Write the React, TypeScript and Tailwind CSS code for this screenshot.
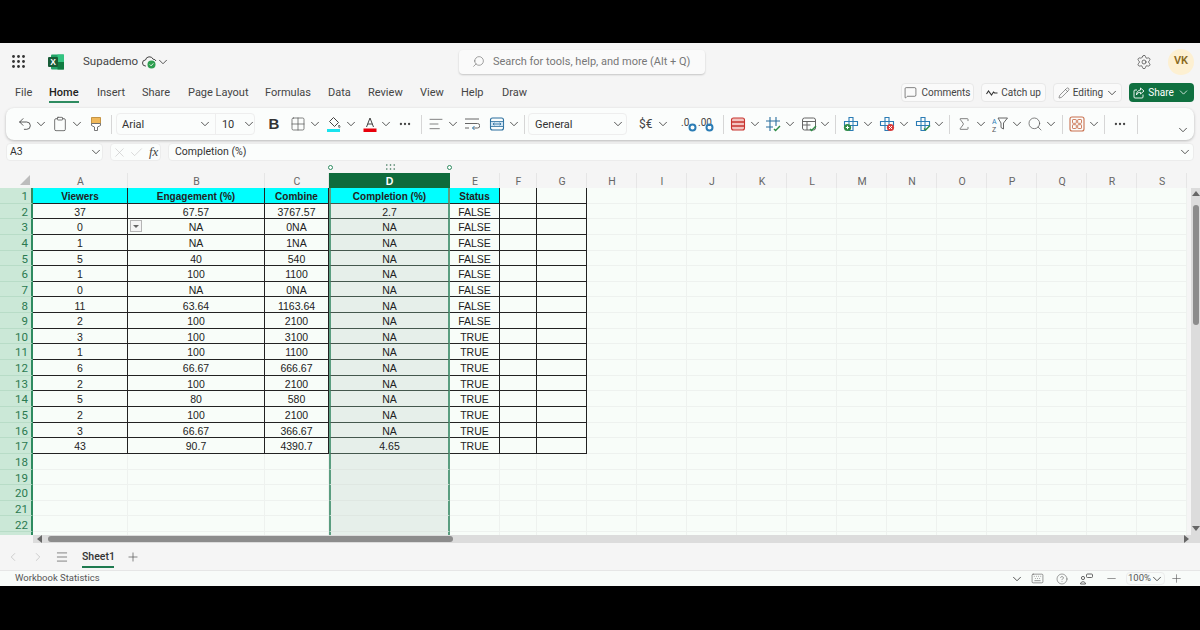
import {
  AlignLeft,
  Check,
  ChevronDown,
  ChevronLeft,
  ChevronRight,
  CircleHelp,
  Clipboard,
  Ellipsis,
  Grid2x2,
  Keyboard,
  Menu,
  MessageSquare,
  Minus,
  Pencil,
  Plus,
  Search,
  Settings,
  Sigma,
  Undo2,
  X,
} from 'lucide-react';

const columns = ['A', 'B', 'C', 'D', 'E', 'F', 'G', 'H', 'I', 'J', 'K', 'L', 'M', 'N', 'O', 'P', 'Q', 'R', 'S'];

const sheet = [
  ['Viewers', 'Engagement (%)', 'Combine', 'Completion (%)', 'Status'],
  ['37', '67.57', '3767.57', '2.7', 'FALSE'],
  ['0', 'NA', '0NA', 'NA', 'FALSE'],
  ['1', 'NA', '1NA', 'NA', 'FALSE'],
  ['5', '40', '540', 'NA', 'FALSE'],
  ['1', '100', '1100', 'NA', 'FALSE'],
  ['0', 'NA', '0NA', 'NA', 'FALSE'],
  ['11', '63.64', '1163.64', 'NA', 'FALSE'],
  ['2', '100', '2100', 'NA', 'FALSE'],
  ['3', '100', '3100', 'NA', 'TRUE'],
  ['1', '100', '1100', 'NA', 'TRUE'],
  ['6', '66.67', '666.67', 'NA', 'TRUE'],
  ['2', '100', '2100', 'NA', 'TRUE'],
  ['5', '80', '580', 'NA', 'TRUE'],
  ['2', '100', '2100', 'NA', 'TRUE'],
  ['3', '66.67', '366.67', 'NA', 'TRUE'],
  ['43', '90.7', '4390.7', '4.65', 'TRUE'],
];

// row 23 only peeks in above the scrollbar, so it has no number
const rowNumbers = Array.from({ length: 23 }, (_, i) => i + 1);

// 14px glyph in an 11px slot, the ribbon spacing is worked out on the slot
function Chev({ className = '' }: { className?: string }) {
  return (
    <span className={`w-[11px] shrink-0 flex justify-center text-[#333] ${className}`}>
      <ChevronDown size={14} strokeWidth={1.4} className="shrink-0" />
    </span>
  );
}

function Sep({ className = '' }: { className?: string }) {
  return <div className={`w-px h-[19px] shrink-0 bg-[#d6d6d6] ${className}`} />;
}

function Cross({ badge }: { badge: string }) {
  return (
    <svg width="16" height="16" viewBox="0 0 16 16" fill="none" className="shrink-0">
      <path d="M6 1.5h4v4h4.5v4H10v5H6v-5H1.5v-4H6z" stroke="#2b7cb5" strokeWidth="1.1" />
      <path d="M6 5.5h4v4H6z" stroke="#2b7cb5" strokeWidth="1" />
      {badge === 'add' && <circle cx="4.5" cy="11.5" r="3.6" fill="#2e8b45" />}
      {badge === 'add' && <path d="M2.8 11.5h3.4M4.5 9.8v3.4" stroke="#fff" strokeWidth="1" />}
      {badge === 'del' && <circle cx="11.5" cy="11.5" r="3.6" fill="#d83b3b" />}
      {badge === 'del' && <path d="M10 10l3 3M13 10l-3 3" stroke="#fff" strokeWidth="1" />}
      {badge === 'fmt' && <path d="M9 12.5l1.6 1.6L15 9.5" stroke="#2e8b45" strokeWidth="1.4" />}
    </svg>
  );
}

function Ribbon() {
  return (
    <div className="mx-[6px] mt-[3px] h-[32px] flex items-center pl-[11px] pr-[6px] rounded-lg bg-[#fbfdfc] shadow-[0_1px_3px_rgba(0,0,0,0.25)]">
      <Undo2 size={16} strokeWidth={1.2} className="shrink-0 text-[#333]" />
      <Chev className="ml-[2px]" />
      <Clipboard size={16} strokeWidth={1.2} className="shrink-0 ml-[6px] text-[#555]" />
      <Chev className="ml-[3px]" />
      <svg width="16" height="16" viewBox="0 0 16 16" fill="none" className="shrink-0 ml-[6px]">
        <path d="M3.5 1.5h9v6h-9z" fill="#f0b85a" stroke="#b9812a" strokeWidth="0.8" />
        <path d="M3.5 7.5h9v2l-3 1.5v3.5h-3V11l-3-1.5z" fill="#fff" stroke="#666" strokeWidth="0.9" />
      </svg>
      <Sep className="ml-[7px]" />
      <div className="ml-[4px] w-[139px] h-[22px] shrink-0 flex items-center rounded border border-[#eeeeee] text-[11px] text-[#333]">
        <span className="pl-[5px] pt-[2px] w-[87px]">Arial</span>
        <Chev />
        <div className="w-px h-full ml-[4px] bg-[#eeeeee]" />
        <span className="pl-[6px] pt-[2px] w-[24px]">10</span>
        <Chev className="ml-[4px]" />
      </div>
      <span className="ml-[13px] w-[12px] shrink-0 text-center text-[15px] font-bold text-[#333] font-['Liberation_Sans',sans-serif]">B</span>
      <Grid2x2 size={16} strokeWidth={1.1} className="shrink-0 ml-[10px] text-[#555]" />
      <Chev className="ml-[3px]" />
      <svg width="16" height="16" viewBox="0 0 16 16" fill="none" className="shrink-0 ml-[6px]">
        <path d="M7.5 1.5l5 5-4 4-5-5z" stroke="#444" strokeWidth="1" />
        <path d="M13 9c1 1.3 1.4 2 .6 2.6-.7.4-1.4-.5-.6-2.6z" stroke="#444" strokeWidth="0.8" />
        <rect x="1" y="13" width="13" height="3" fill="#19e3ee" />
      </svg>
      <Chev className="ml-[3px]" />
      <svg width="16" height="16" viewBox="0 0 16 16" fill="none" className="shrink-0 ml-[6px]">
        <path d="M4.5 11L8 2l3.5 9M5.6 8h4.8" stroke="#444" strokeWidth="1" />
        <rect x="1.5" y="12.5" width="13" height="3.5" fill="#e8000b" />
      </svg>
      <Chev className="ml-[2px]" />
      <Ellipsis size={14} strokeWidth={2} className="shrink-0 ml-[7px] text-[#444]" />
      <Sep className="ml-[9px]" />
      <AlignLeft size={16} strokeWidth={1.1} className="shrink-0 ml-[6px] text-[#555]" />
      <Chev className="ml-[3px]" />
      <svg width="16" height="16" viewBox="0 0 16 16" fill="none" className="shrink-0 ml-[6px]">
        <path d="M1 3h14M1 7.5h12.5a2 2 0 010 4.5H8.5M1 12h4" stroke="#666" strokeWidth="1" />
        <path d="M10.5 10l-2 2 2 2" stroke="#2b7cb5" strokeWidth="1" />
      </svg>
      <svg width="16" height="16" viewBox="0 0 16 16" fill="none" className="shrink-0 ml-[9px]">
        <rect x="1.5" y="2" width="13" height="12" rx="2" stroke="#2b6f9e" strokeWidth="1.1" />
        <rect x="1.5" y="5.5" width="13" height="5" fill="#cfe4f3" stroke="#2b6f9e" strokeWidth="0.8" />
        <path d="M4 8h8M4 8l1.5-1.2M4 8l1.5 1.2M12 8l-1.5-1.2M12 8l-1.5 1.2" stroke="#2b6f9e" strokeWidth="0.8" />
      </svg>
      <Chev className="ml-[3px]" />
      <Sep className="ml-[5px]" />
      <div className="ml-[3px] w-[99px] h-[22px] shrink-0 flex items-center justify-between pl-[6px] pr-[3px] rounded border border-[#eeeeee] text-[11px] text-[#333]">
        <span className="pt-[2px]">General</span>
        <Chev />
      </div>
      <span className="ml-[12px] w-[16px] shrink-0 text-[12px] text-[#444] whitespace-nowrap">$€</span>
      <Chev className="ml-[2px]" />
      <svg width="16" height="16" viewBox="0 0 16 16" fill="none" className="shrink-0 ml-[13px]">
        <text x="0" y="10" fontSize="10" fill="#444" fontFamily="Roboto">.0</text>
        <circle cx="11.5" cy="11.5" r="3" stroke="#2b7cb5" strokeWidth="2" />
      </svg>
      <svg width="16" height="16" viewBox="0 0 16 16" fill="none" className="shrink-0 ml-[1px]">
        <text x="0" y="10" fontSize="10" fill="#444" fontFamily="Roboto">.00</text>
        <circle cx="11.5" cy="11.5" r="3" stroke="#2b7cb5" strokeWidth="2" />
      </svg>
      <Sep className="ml-[9px]" />
      <svg width="16" height="16" viewBox="0 0 16 16" fill="none" className="shrink-0 ml-[6px]">
        <rect x="1.5" y="2" width="13" height="12" rx="2" fill="#f3c3c0" stroke="#c8342f" strokeWidth="1.1" />
        <path d="M1.5 6h13M1.5 10h13" stroke="#c8342f" strokeWidth="1.6" />
      </svg>
      <Chev className="ml-[3px]" />
      <svg width="16" height="16" viewBox="0 0 16 16" fill="none" className="shrink-0 ml-[5px]">
        <path d="M5 1v14M11 1v9M1 5h14M1 11h7" stroke="#2b6f9e" strokeWidth="1.1" />
        <path d="M9 13l1.6 1.6L15 10" stroke="#2e8b45" strokeWidth="1.4" />
      </svg>
      <Chev className="ml-[3px]" />
      <svg width="16" height="16" viewBox="0 0 16 16" fill="none" className="shrink-0 ml-[6px]">
        <rect x="1.5" y="2" width="13" height="12" rx="2" stroke="#666" strokeWidth="1" />
        <path d="M1.5 5.5h13M1.5 9h8M6 5.5V14" stroke="#666" strokeWidth="1" />
        <path d="M9 13l1.6 1.6L15 10" stroke="#2e8b45" strokeWidth="1.4" />
      </svg>
      <Chev className="ml-[2px]" />
      <Sep className="ml-[5px]" />
      <div className="ml-[7px]"><Cross badge="add" /></div>
      <Chev className="ml-[3px]" />
      <div className="ml-[6px]"><Cross badge="del" /></div>
      <Chev className="ml-[3px]" />
      <div className="ml-[6px]"><Cross badge="fmt" /></div>
      <Chev className="ml-[2px]" />
      <Sep className="ml-[5px]" />
      <Sigma size={16} strokeWidth={1.1} className="shrink-0 ml-[6px] text-[#555]" />
      <Chev className="ml-[3px]" />
      <svg width="16" height="16" viewBox="0 0 16 16" fill="none" className="shrink-0 ml-[6px]">
        <path d="M6 2h9.5l-4 5v6l-2.5-1.5V7z" stroke="#666" strokeWidth="1" />
        <text x="0" y="8" fontSize="7" fill="#2b7cb5" fontFamily="Roboto">A</text>
        <text x="0" y="15.5" fontSize="7" fill="#555" fontFamily="Roboto">Z</text>
      </svg>
      <Chev className="ml-[3px]" />
      <Search size={16} strokeWidth={1.1} className="shrink-0 ml-[5px] text-[#555]" />
      <Chev className="ml-[2px]" />
      <Sep className="ml-[6px]" />
      <svg width="16" height="16" viewBox="0 0 16 16" fill="none" className="shrink-0 ml-[6px]">
        <rect x="1" y="1" width="14" height="14" rx="2" stroke="#c9714f" strokeWidth="1.1" />
        <rect x="3.5" y="3.5" width="3.8" height="3.8" rx="0.6" stroke="#c9714f" strokeWidth="0.9" />
        <rect x="8.7" y="3.5" width="3.8" height="3.8" rx="0.6" stroke="#c9714f" strokeWidth="0.9" />
        <rect x="3.5" y="8.7" width="3.8" height="3.8" rx="0.6" stroke="#c9714f" strokeWidth="0.9" />
        <rect x="8.7" y="8.7" width="3.8" height="3.8" rx="0.6" stroke="#c9714f" strokeWidth="0.9" />
      </svg>
      <Chev className="ml-[3px]" />
      <Sep className="ml-[5px]" />
      <Ellipsis size={14} strokeWidth={2} className="shrink-0 ml-[8px] text-[#444]" />
      <Sep className="ml-[10px]" />
      <Chev className="ml-auto self-end mb-[3px]" />
    </div>
  );
}

function Grid() {
  return (
    <div className="relative flex-1 min-w-0 h-[362px] overflow-hidden">
      <div className="grid grid-cols-[33px_95px_137px_64px_121px_50px_37px_50px_repeat(12,50px)] grid-rows-[15px] auto-rows-[15.65px] text-[10.5px] leading-none font-['Liberation_Sans',sans-serif] text-[#222]">
        <div className="relative bg-[#f5f5f5]">
          <svg width="10" height="10" viewBox="0 0 10 10" className="absolute right-[3px] bottom-[3px]">
            <path d="M10 0v10H0z" fill="#bdbdbd" />
          </svg>
        </div>
        {columns.map((c) =>
          c === 'D' ? (
            <div key={c} className="flex items-center justify-center pt-[2px] bg-[#0f6b3c] text-white font-bold text-[10.5px]">{c}</div>
          ) : (
            <div key={c} className="flex items-center justify-center pl-px pt-[3px] bg-[#f5f5f5] border-r border-[#e6e6e6] text-[#666] text-[10.5px] font-['Roboto',sans-serif]">{c}</div>
          )
        )}
        {rowNumbers.map((n) => (
          <Row key={n} n={n} />
        ))}
      </div>
    </div>
  );
}

function Row({ n }: { n: number }) {
  const data = sheet[n - 1];
  return (
    <>
      <div className="flex items-center justify-end pr-[3px] pt-[3px] bg-[#cbe8d7] border-r-2 border-[#2e8b60] border-b border-b-[#b8dcc7] text-[#2a7a50] text-[11.5px] font-['Roboto',sans-serif]">
        {n < 23 ? n : ''}
      </div>
      {columns.map((c, i) => {
        const text = data && i < 5 ? data[i] : '';
        const inTable = data && i < 7;
        const header = n === 1 && i < 5;
        if (c === 'D') {
          return (
            <div
              key={c}
              className={`flex items-center justify-center border-x-2 border-x-[#5a9e80] border-b ${inTable ? 'border-b-[#44574d]' : 'border-b-[#dfe7e2]'} ${header ? 'bg-[#00ffff] font-bold text-[10px] pt-[3px]' : 'bg-[#e6efea] pt-[2px]'}`}
            >
              {text}
            </div>
          );
        }
        return (
          <div
            key={c}
            className={`relative flex items-center justify-center border-r border-b ${inTable ? 'border-[#222]' : 'border-[#eef2ef]'} ${header ? 'bg-[#00ffff] font-bold text-[10px] pt-[3px]' : 'bg-[#f8fdf9] pt-[2px]'}`}
          >
            {text}
            {n === 3 && c === 'B' && (
              <div className="absolute left-[2px] top-[1px] w-[12px] h-[12px] bg-[#f5f5f5] border border-[#b5b5b5] flex items-center justify-center">
                <div className="w-0 h-0 border-x-[3px] border-x-transparent border-t-[3px] border-t-[#666]" />
              </div>
            )}
          </div>
        );
      })}
    </>
  );
}

export default function App() {
  return (
    <div className="w-[1200px] h-[630px] flex flex-col bg-black overflow-hidden font-['Roboto',sans-serif] text-[#333]">
      <div className="h-[43px] shrink-0" />
      <div className="flex-1 flex flex-col bg-[#f5f5f5] min-h-0">
        {/* Title bar */}
        <div className="h-[37px] shrink-0 flex items-center pl-[12px] pr-[6px]">
          <svg width="13" height="13" viewBox="0 0 13 13" fill="#333" className="shrink-0">
            {[1.5, 6.5, 11.5].map((y) =>
              [1.5, 6.5, 11.5].map((x) => <circle key={`${x}-${y}`} cx={x} cy={y} r="1.4" />)
            )}
          </svg>
          <svg width="16" height="16" viewBox="0 0 16 16" className="shrink-0 ml-[23px]">
            <rect x="3" y="0.5" width="13" height="15" rx="1" fill="#21a366" />
            <rect x="9.5" y="0.5" width="6.5" height="7.5" fill="#33c481" />
            <rect x="9.5" y="8" width="6.5" height="7.5" fill="#107c41" />
            <rect x="0" y="3" width="10" height="10" rx="1" fill="#185c37" />
            <text x="5" y="11" textAnchor="middle" fontSize="8.5" fontWeight="700" fill="#fff" fontFamily="Liberation Sans">X</text>
          </svg>
          <span className="ml-[19px] pt-px text-[11.5px] text-[#444] w-[59px] whitespace-nowrap">Supademo</span>
          <svg width="16" height="14" viewBox="0 0 16 14" fill="none" className="shrink-0">
            <path d="M4 11H3.5a3 3 0 010-6 4 4 0 017.6-.8A3 3 0 0114 6" stroke="#444" strokeWidth="1" />
            <circle cx="9.5" cy="9.5" r="4" fill="#2e9e50" />
            <path d="M7.8 9.5l1.3 1.3 2.2-2.4" stroke="#fff" strokeWidth="0.9" />
          </svg>
          <Chev className="ml-[-1px]" />
          <div className="ml-[291px] w-[246px] h-[24px] shrink-0 flex items-center pl-[13px] rounded bg-[#fafafa] shadow-[0_1px_2px_rgba(0,0,0,0.2)] text-[11px] text-[#777] whitespace-nowrap">
            <Search size={13} strokeWidth={1.1} className="-scale-x-100 text-[#666]" />
            <span className="ml-[8px] pt-[2px]">Search for tools, help, and more (Alt + Q)</span>
          </div>
          <Settings size={16} strokeWidth={1.1} className="ml-auto text-[#444]" />
          <div className="ml-[16px] w-[26px] h-[26px] shrink-0 flex items-center justify-center rounded-full bg-[#fdf0d2] text-[#8a6a1f] text-[11px] font-semibold">VK</div>
        </div>
        {/* Tabs */}
        <div className="h-[25px] shrink-0 flex items-center pl-[15px] pr-[6px] pt-[2px] text-[11px] text-[#444]">
          <span className="w-[34px]">File</span>
          <span className="w-[48px] relative h-full flex items-center font-medium text-[#222]">
            Home
            <span className="absolute left-0 bottom-[2px] w-[30px] h-[2px] bg-[#2e8b60]" />
          </span>
          <span className="w-[45px]">Insert</span>
          <span className="w-[46px]">Share</span>
          <span className="w-[77px]">Page Layout</span>
          <span className="w-[63px]">Formulas</span>
          <span className="w-[40px]">Data</span>
          <span className="w-[52px]">Review</span>
          <span className="w-[41px]">View</span>
          <span className="w-[41px]">Help</span>
          <span>Draw</span>
          <div className="ml-auto -mt-[2px] flex items-center gap-[7px] text-[10px]">
            <div className="w-[73px] h-[19px] flex items-center justify-center gap-[4px] rounded bg-[#fafafa] border border-[#e8e8e8] whitespace-nowrap">
              <MessageSquare size={13} strokeWidth={1.2} />
              Comments
            </div>
            <div className="w-[65px] h-[19px] flex items-center justify-center gap-[3px] rounded bg-[#fafafa] border border-[#e8e8e8] whitespace-nowrap">
              <svg width="12" height="8" viewBox="0 0 12 8" fill="none" stroke="#333" strokeWidth="1.1">
                <path d="M0.5 5l2-3 3 4 2-3 1 1h3" />
              </svg>
              Catch up
            </div>
            <div className="w-[69px] h-[19px] flex items-center justify-center gap-[3px] rounded bg-[#fafafa] border border-[#e8e8e8] whitespace-nowrap">
              <Pencil size={12} strokeWidth={1.1} />
              Editing
              <Chev />
            </div>
            <div className="w-[65px] h-[19px] flex items-center justify-center gap-[3px] rounded bg-[#107040] text-white whitespace-nowrap">
              <svg width="12" height="12" viewBox="0 0 12 12" fill="none" stroke="#fff" strokeWidth="0.9">
                <path d="M10 7.5V10a1 1 0 01-1 1H2a1 1 0 01-1-1V4a1 1 0 011-1h2" />
                <path d="M7.5 1l3.5 3-3.5 3V5.3C5.5 5.3 4.3 6 3.5 8c0-3 1.5-4.7 4-5z" />
              </svg>
              Share
              <ChevronDown size={13} strokeWidth={1.4} />
            </div>
          </div>
        </div>
        <Ribbon />
        {/* Formula bar */}
        <div className="mt-[3px] h-[18px] shrink-0 flex items-center px-[6px] text-[10.5px] text-[#333]">
          <div className="w-[97px] h-full flex items-center justify-between pl-[3px] pr-[1px] rounded bg-[#fbfdfc] border border-[#ececec]">
            A3
            <Chev />
          </div>
          <div className="ml-[7px] w-[51px] h-full flex items-center gap-[2px] pl-[1px] rounded bg-[#fbfdfc] border border-[#ececec] text-[#c5c5c5]">
            <X size={15} strokeWidth={1} />
            <Check size={15} strokeWidth={1} />
            <span className="ml-[3px] text-[#444] text-[13px] italic font-['Liberation_Serif',serif]">fx</span>
          </div>
          <div className="ml-[7px] flex-1 h-full flex items-center justify-between pl-[6px] pr-[3px] rounded bg-[#fbfdfc] border border-[#ececec]">
            Completion (%)
            <Chev />
          </div>
        </div>
        {/* Selection handles */}
        <div className="relative h-[12px] shrink-0">
          <div className="absolute left-[328px] top-[4px] w-[5px] h-[5px] rounded-full border border-[#2e8b60] bg-white" />
          <div className="absolute left-[447px] top-[4px] w-[5px] h-[5px] rounded-full border border-[#2e8b60] bg-white" />
          <svg width="9" height="6" viewBox="0 0 9 6" fill="#2e6b4c" className="absolute left-[386px] top-[3px]">
            {[0.75, 4.5, 8.25].map((x) =>
              [1, 5].map((y) => <circle key={`${x}-${y}`} cx={x} cy={y} r="0.8" />)
            )}
          </svg>
        </div>
        {/* Sheet with vertical scrollbar */}
        <div className="h-[362px] shrink-0 flex">
          <Grid />
          <div className="w-[9px] mt-[15px] shrink-0 flex flex-col items-center bg-[#dcdcdc] pt-[3px] pb-[4px]">
            <div className="w-0 h-0 border-x-[4px] border-x-transparent border-b-[5px] border-b-[#666]" />
            <div className="mt-[9px] w-[6px] h-[120px] rounded-full bg-[#8c8c8c]" />
            <div className="mt-auto w-0 h-0 border-x-[4px] border-x-transparent border-t-[5px] border-t-[#666]" />
          </div>
        </div>
        {/* Horizontal scrollbar */}
        <div className="ml-[33px] h-[8px] shrink-0 flex items-center pl-[4px] pr-[11px] bg-[#dcdcdc]">
          <div className="w-0 h-0 border-y-[4px] border-y-transparent border-r-[5px] border-r-[#666]" />
          <div className="ml-[6px] w-[405px] h-[6px] rounded-full bg-[#8c8c8c]" />
          <div className="ml-auto w-0 h-0 border-y-[4px] border-y-transparent border-l-[5px] border-l-[#666]" />
        </div>
        {/* Sheet tabs */}
        <div className="h-[27px] shrink-0 flex items-center pl-[6px] text-[#555]">
          <ChevronLeft size={14} strokeWidth={1.2} className="text-[#bbb]" />
          <ChevronRight size={14} strokeWidth={1.2} className="ml-[11px] text-[#bbb]" />
          <Menu size={14} strokeWidth={1.2} className="ml-[10px]" />
          <div className="ml-[13px] w-[32px] h-full relative flex items-center text-[10.5px] font-medium text-[#333]">
            Sheet1
            <span className="absolute left-0 bottom-[2px] w-full h-[2px] bg-[#1f7a50]" />
          </div>
          <Plus size={14} strokeWidth={1.2} className="ml-[12px]" />
        </div>
        {/* Status bar */}
        <div className="flex-1 flex items-center pl-[15px] pr-[17px] bg-[#f8fbf9] border-t border-[#e6e6e6] text-[9.5px] text-[#555]">
          Workbook Statistics
          <Chev className="ml-auto" />
          <Keyboard size={13} strokeWidth={1.1} className="ml-[9px]" />
          <CircleHelp size={12} strokeWidth={1.1} className="ml-[12px]" />
          <svg width="13" height="12" viewBox="0 0 13 12" fill="none" stroke="#555" strokeWidth="0.9" className="ml-[12px]">
            <rect x="6.5" y="1" width="6" height="3.5" rx="1" />
            <circle cx="3" cy="5" r="1.6" />
            <path d="M0.5 11c0-3 5-3 5 0z" />
          </svg>
          <Minus size={13} strokeWidth={1.1} className="ml-[12px]" />
          <div className="ml-[8px] w-[39px] h-[13px] flex items-center justify-center gap-[1px] rounded-sm border border-[#ececec]">
            100%
            <Chev />
          </div>
          <Plus size={13} strokeWidth={1.1} className="ml-[5px]" />
        </div>
      </div>
      <div className="h-[44px] shrink-0" />
    </div>
  );
}
